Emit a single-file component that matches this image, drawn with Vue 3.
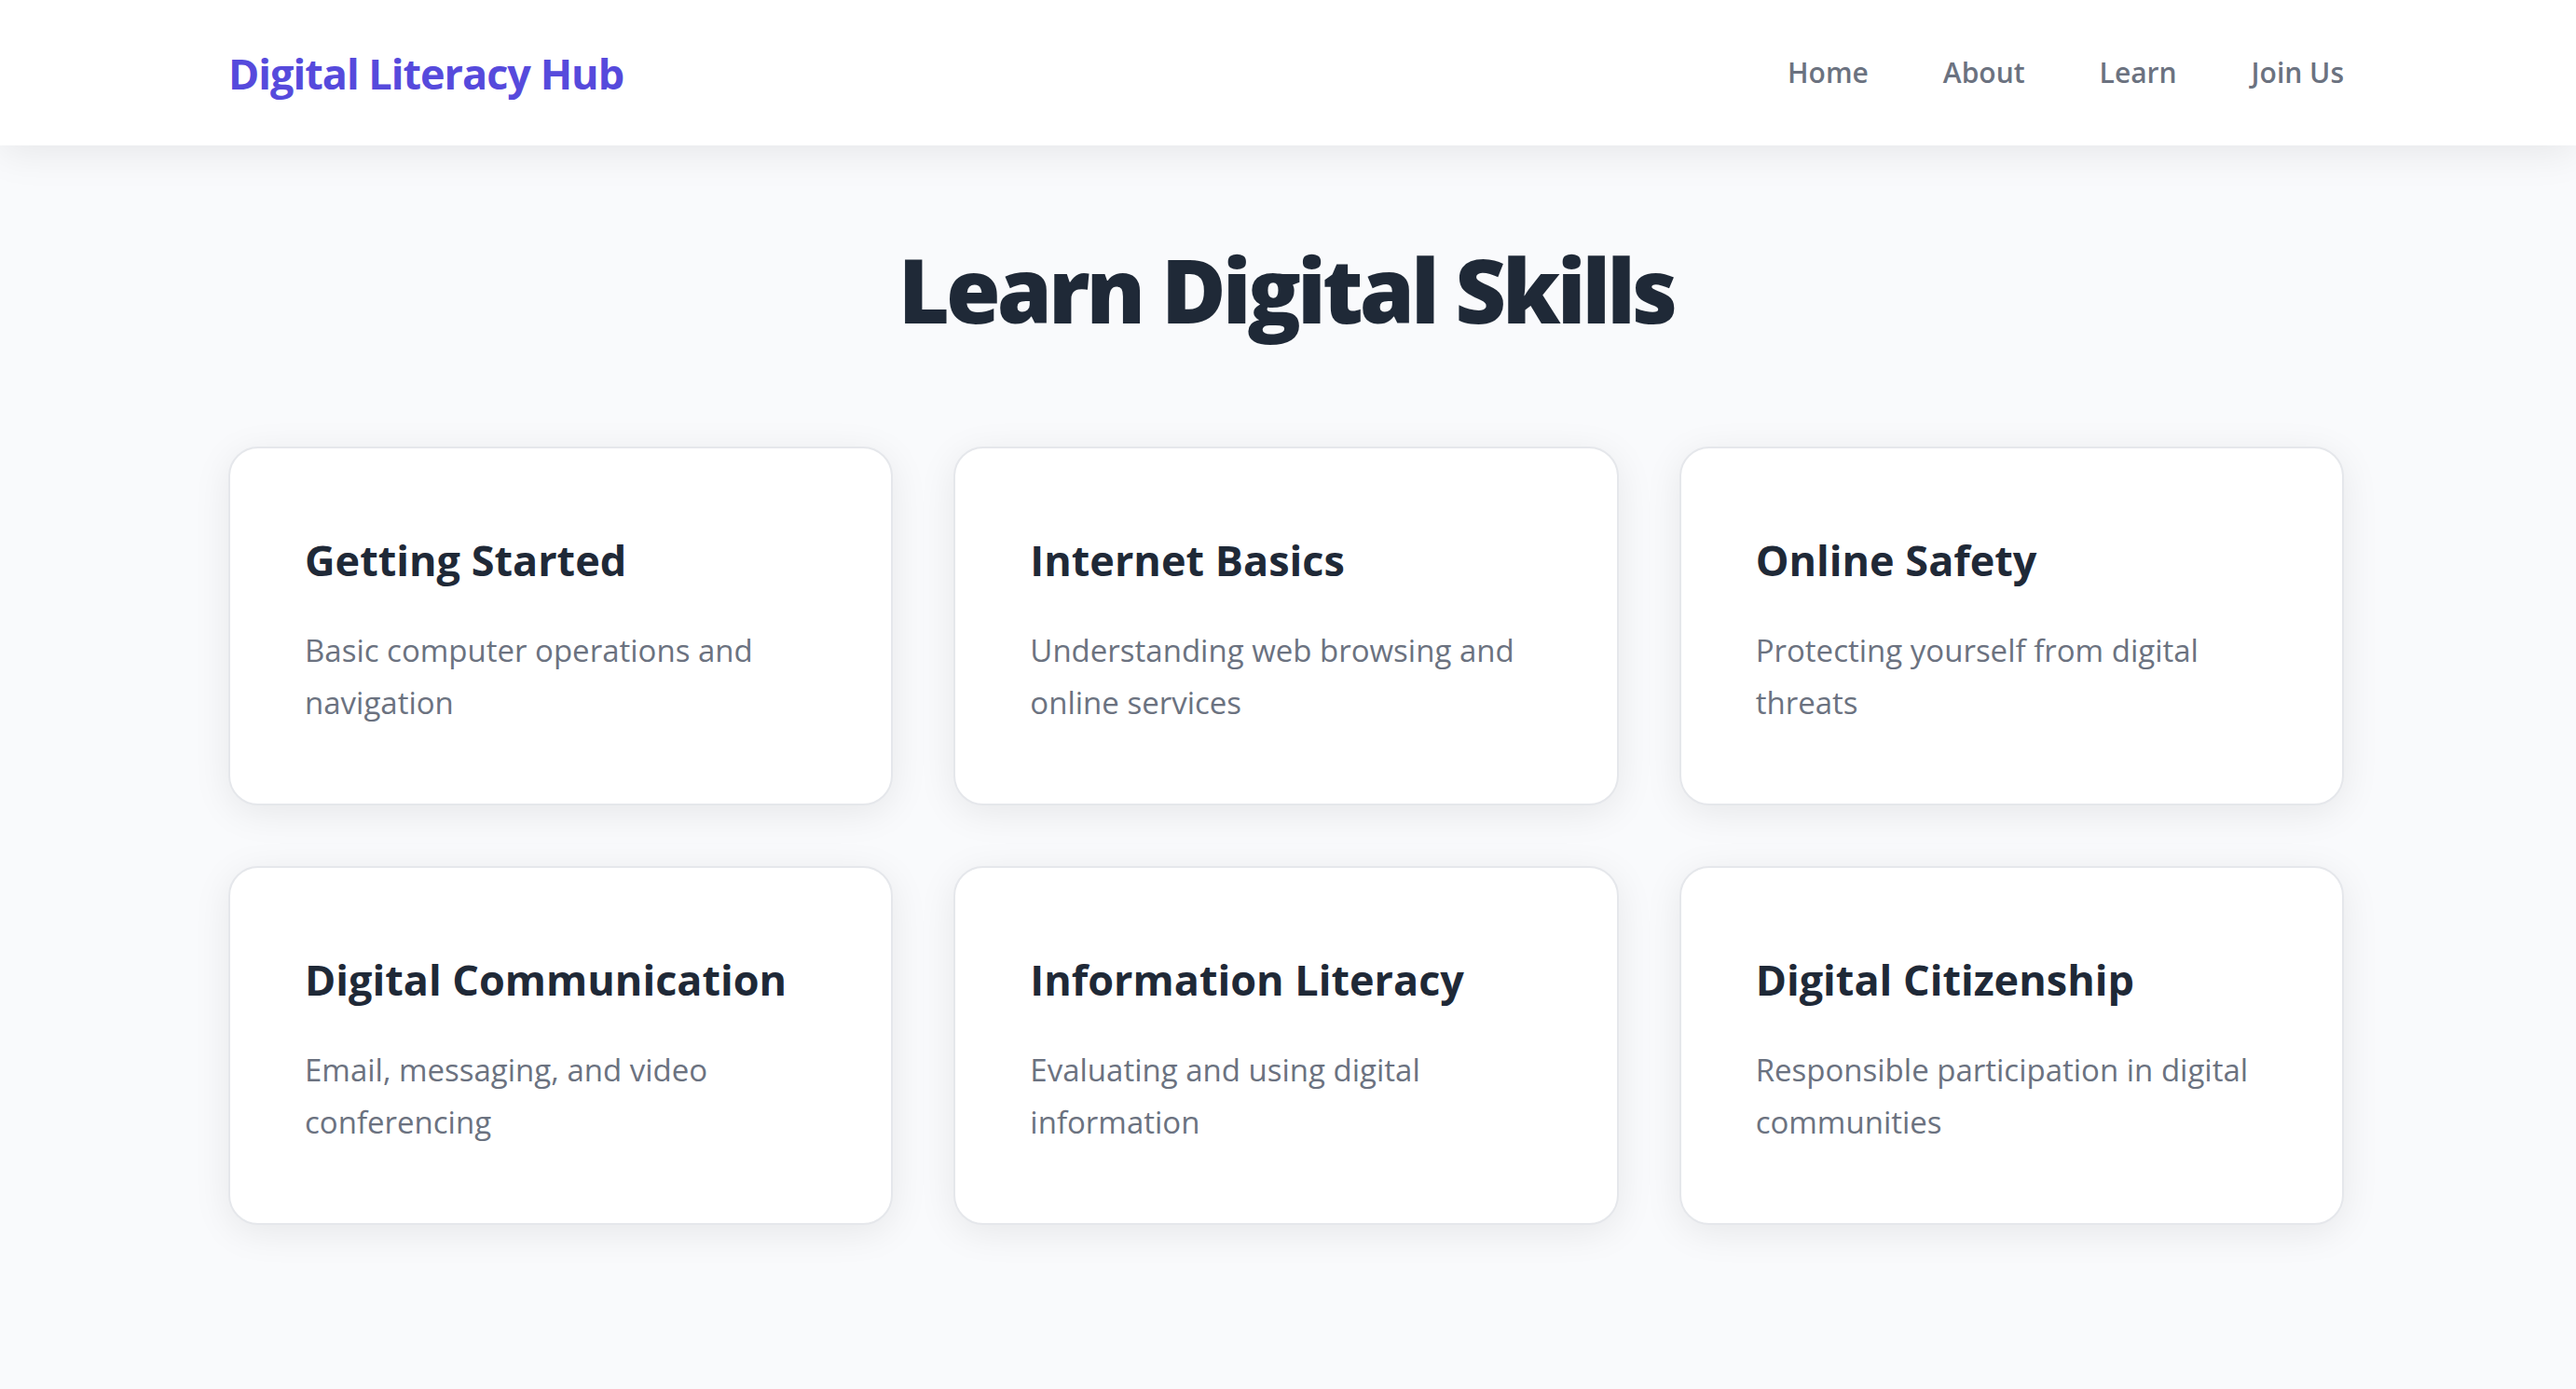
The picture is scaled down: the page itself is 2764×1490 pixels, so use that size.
<script setup>
const links = ['Home', 'About', 'Learn', 'Join Us']
const topics = [
  { title: 'Getting Started', text: 'Basic computer operations and navigation' },
  { title: 'Internet Basics', text: 'Understanding web browsing and online services' },
  { title: 'Online Safety', text: 'Protecting yourself from digital threats' },
  { title: 'Digital Communication', text: 'Email, messaging, and video conferencing' },
  { title: 'Information Literacy', text: 'Evaluating and using digital information' },
  { title: 'Digital Citizenship', text: 'Responsible participation in digital communities' },
]
</script>

<template>
  <div class="page">
    <header class="header">
      <nav class="nav">
        <a class="logo" href="#">Digital Literacy Hub</a>
        <ul class="links">
          <li v-for="link in links" :key="link"><a href="#">{{ link }}</a></li>
        </ul>
      </nav>
    </header>
    <main class="main">
      <h1>Learn Digital Skills</h1>
      <div class="grid">
        <article v-for="topic in topics" :key="topic.title" class="card">
          <h2>{{ topic.title }}</h2>
          <p>{{ topic.text }}</p>
        </article>
      </div>
    </main>
  </div>
</template>

<style>
body {
  background: #f9fafc;
}
</style>

<style scoped>
.page {
  min-height: 100vh;
  background: #f9fafc;
  color: #1f2937;
  font-family: "Open Sans", "Noto Sans", sans-serif;
}
.header {
  background: #fff;
  box-shadow: 0 8px 40px rgba(0, 0, 0, 0.08);
}
.nav,
.main {
  max-width: 2270px;
  margin: 0 auto;
  padding: 0 4px 0 0;
}
.nav {
  display: flex;
  align-items: center;
  justify-content: space-between;
  height: 156px;
}
.logo {
  color: #564adc;
  font-size: 45px;
  font-weight: 700;
  letter-spacing: -1px;
  text-decoration: none;
}
.links {
  display: flex;
  gap: 80px;
  margin: 0;
  padding: 0;
  list-style: none;
}
.links a {
  color: #6b7280;
  font-size: 30px;
  font-weight: 600;
  line-height: 44px;
  text-decoration: none;
}
.main {
  padding-top: 94px;
  padding-bottom: 94px;
}
h1 {
  margin: 0 0 109px;
  font-size: 95px;
  font-weight: 800;
  line-height: 120px;
  letter-spacing: -4px;
  text-align: center;
}
.grid {
  display: grid;
  grid-template-columns: repeat(3, 1fr);
  gap: 65px;
}
.card {
  padding: 80px;
  border: 2px solid #e5e7eb;
  border-radius: 32px;
  background: #fff;
  box-shadow: 0 8px 40px rgba(0, 0, 0, 0.08);
}
h2 {
  margin: 0 0 30px;
  font-size: 45px;
  font-weight: 700;
  line-height: 79px;
}
p {
  margin: 0;
  color: #6b7280;
  font-size: 33px;
  line-height: 56px;
}
</style>
